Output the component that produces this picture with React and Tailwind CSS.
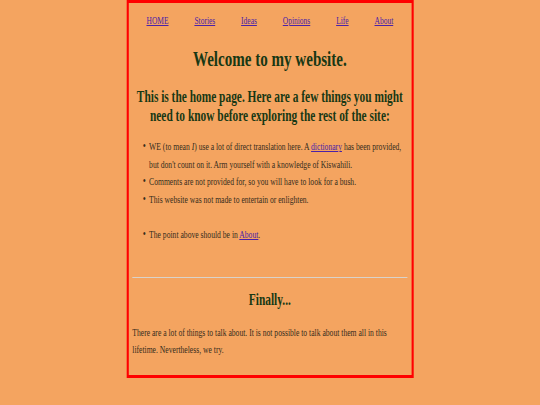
import React from 'react';

const navItems = ['HOME', 'Stories', 'Ideas', 'Opinions', 'Life', 'About'];

const Bullet = ({ children, className = '' }) => (
  <li className={`flex ${className}`}>
    <span className="w-[9px] shrink-0 text-[12.5px]">•</span>
    <span>{children}</span>
  </li>
);

const App = () => {
  return (
    <div className="w-[540px] h-[405px] overflow-hidden bg-[#f4a460]">
      {/* the page is laid out wider and squeezed to the window width */}
      <div className="w-[771px] origin-top-left scale-x-70 font-['Liberation_Serif','Times_New_Roman',serif] text-[#352c1c]">
        <div className="mx-auto w-[410px] border-[3px] border-[#f00] px-[5.5px] pb-[16px]">
          {/* --- NAV --- */}
          <nav className="pt-[11px] flex justify-center gap-[37px] text-[10.7px] leading-[12px]">
            {navItems.map((item) => (
              <a key={item} href="#" className="underline text-[#4a22a8]">
                {item}
              </a>
            ))}
          </nav>

          <h1 className="mt-[20.5px] text-center text-[21.5px] leading-[24px] font-bold text-[#183814]">
            Welcome to my website.
          </h1>

          <h2 className="mt-[16px] text-center text-[16.3px] leading-[19.5px] font-bold text-[#183814]">
            This is the home page. Here are a few things you might need to know before exploring the rest of the site:
          </h2>

          {/* --- LIST --- */}
          <ul className="mt-[12.75px] pl-[15px] text-[10.9px] leading-[17.5px]">
            <Bullet>
              WE (to mean <i>I</i>) use a lot of direct translation here. A{' '}
              <a href="#" className="underline text-[#4a22a8]">dictionary</a> has been provided, but don't count on it. Arm yourself with a knowledge of Kiswahili.
            </Bullet>
            <Bullet>Comments are not provided for, so you will have to look for a bush.</Bullet>
            <Bullet>This website was not made to entertain or enlighten.</Bullet>
            <Bullet className="mt-[17.5px]">
              The point above should be in{' '}
              <a href="#" className="underline text-[#4a22a8]">About</a>.
            </Bullet>
          </ul>

          <div className="mt-[33.75px] border-t border-[#d9d2ca]" />

          <h2 className="mt-[12.25px] text-center text-[16.3px] leading-[19.5px] font-bold text-[#183814]">
            Finally...
          </h2>

          <p className="mt-[14px] text-[10.9px] leading-[17.5px]">
            There are a lot of things to talk about. It is not possible to talk about them all in this lifetime. Nevertheless, we try.
          </p>
        </div>
      </div>
    </div>
  );
};

export default App;
